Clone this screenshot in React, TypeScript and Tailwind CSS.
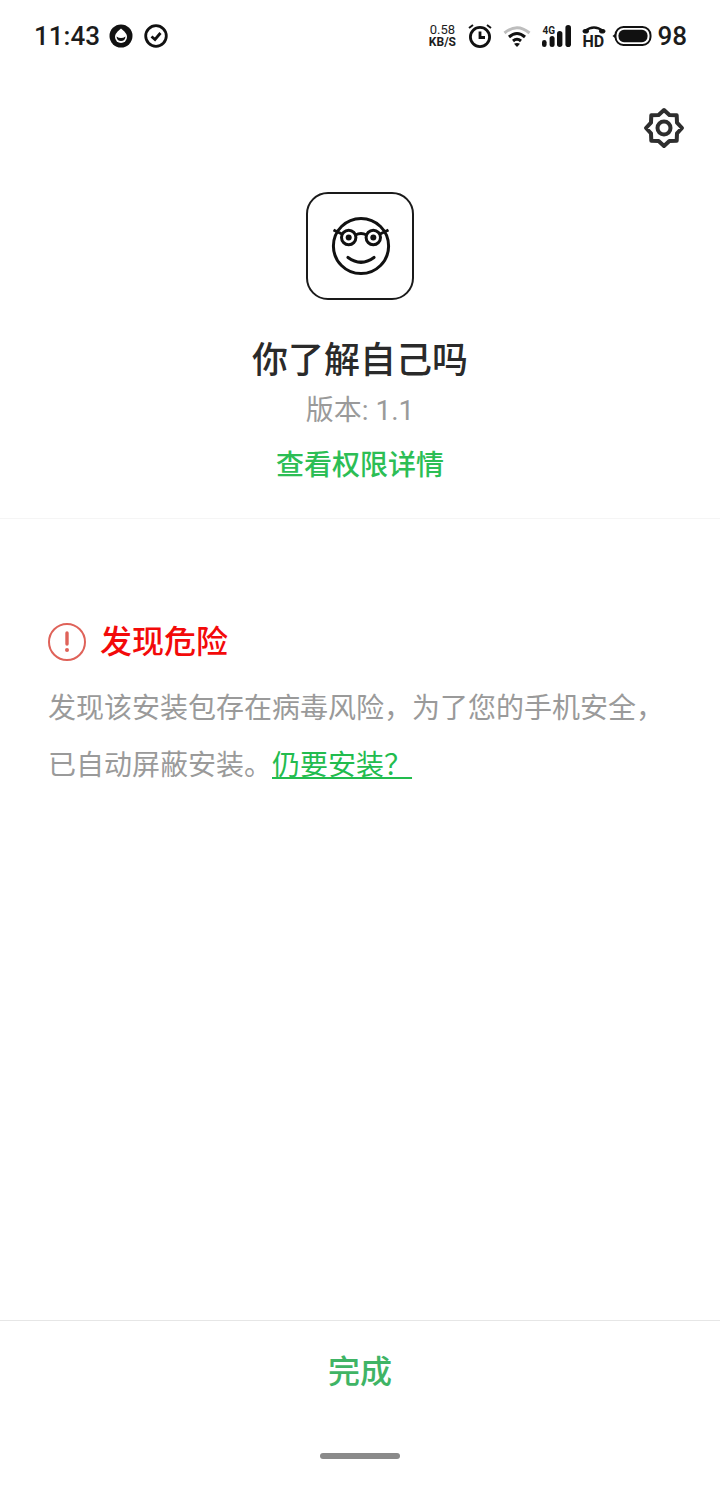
import React from "react";

const font = { fontFamily: '"Roboto", "Noto Sans CJK SC", sans-serif' };

const StatusBar = () => (
  <div className="h-[72px] flex items-center justify-between pl-[34px] pr-[33px] text-[#1c1c1c]">
    <div className="flex items-center">
      <span className="text-[26px] leading-none font-medium w-[66px]">11:43</span>
      <svg className="ml-[9px]" width="24" height="24" viewBox="0 0 24 24">
        <circle cx="12" cy="12" r="11.5" fill="#111" />
        <path d="M12 4.5 C15 7 18 9.5 18 13 A6 6 0 0 1 6 13 C6 9.5 9 7 12 4.5Z" fill="#fff" />
        <path d="M7.5 12.5 Q12 15.5 16.5 12.5 Q16 17 12 17 Q8 17 7.5 12.5Z" fill="#111" />
      </svg>
      <svg className="ml-[11px]" width="24" height="24" viewBox="0 0 24 24" fill="none" stroke="#111">
        <circle cx="12" cy="12" r="10.3" strokeWidth="2.8" />
        <path d="M7.5 12.5 L11 15.5 L16.5 9" strokeWidth="2.8" />
      </svg>
    </div>
    <div className="flex items-center">
      <div className="flex flex-col items-center leading-[12px] w-[28px]">
        <span className="text-[13px]">0.58</span>
        <span className="text-[12px] font-bold">KB/S</span>
      </div>
      <svg className="ml-[11px]" width="26" height="26" viewBox="0 0 26 26" fill="none" stroke="#111">
        <circle cx="13" cy="14" r="9.6" strokeWidth="2.8" />
        <path d="M13 8.5 V14.5 H18" strokeWidth="2.8" />
        <path d="M2 5 L6 2 M24 5 L20 2" strokeWidth="2" />
      </svg>
      <svg className="ml-[10px]" width="28" height="24" viewBox="0 0 28 24" fill="none">
        <path d="M1.5 9 Q14 -1.5 26.5 9" stroke="#bdbdbd" strokeWidth="3" />
        <path d="M6 13 Q14 6 22 13" stroke="#111" strokeWidth="3" />
        <path d="M10 17 Q14 13.5 18 17" stroke="#111" strokeWidth="3" />
        <path d="M14 23 L11 19.8 Q14 18 17 19.8Z" fill="#111" />
      </svg>
      <div className="ml-[11px] relative w-[30px] h-[22px]">
        <span className="absolute left-0 top-[0px] text-[10px] leading-[11px] font-bold">4G</span>
        <svg className="absolute inset-0" width="30" height="22" viewBox="0 0 30 22" fill="#111">
          <rect x="0" y="15" width="4.6" height="7" rx="2.3" />
          <rect x="7.6" y="11" width="5" height="11" rx="2.5" />
          <rect x="15" y="6" width="5.4" height="16" rx="2.7" />
          <rect x="23.4" y="0" width="5.6" height="22" rx="2.8" />
        </svg>
      </div>
      <div className="ml-[10px] relative w-[24px] h-[22px]">
        <svg className="absolute inset-0" width="24" height="22" viewBox="0 0 24 22" fill="none" stroke="#111">
          <path d="M3 6 Q12 -1 21 6" strokeWidth="2.6" />
          <rect x="1" y="4.5" width="5.5" height="3.5" rx="1.7" fill="#111" />
          <rect x="17.5" y="4.5" width="5.5" height="3.5" rx="1.7" fill="#111" />
        </svg>
        <span className="absolute left-0 top-[10px] text-[16px] leading-[14px] font-bold">HD</span>
      </div>
      <svg className="ml-[6px]" width="40" height="20" viewBox="0 0 40 20">
        <path d="M0.5 10 L3 8 V12Z" fill="#111" />
        <rect x="3.5" y="1" width="35" height="18" rx="8" fill="none" stroke="#111" strokeWidth="2" />
        <rect x="6.5" y="3.8" width="29" height="12.4" rx="5.5" fill="#111" />
      </svg>
      <span className="ml-[5px] text-[26px] leading-none font-medium">98</span>
    </div>
  </div>
);

const GearIcon = () => (
  <svg width="42" height="42" viewBox="0 0 42 42" fill="none" stroke="#2e2e2e" strokeWidth="4" strokeLinejoin="round">
    <path d="M21 3 L26.4 8 L33.7 8.3 L34 15.6 L39 21 L34 26.4 L33.7 33.7 L26.4 34 L21 39 L15.6 34 L8.3 33.7 L8 26.4 L3 21 L8 15.6 L8.3 8.3 L15.6 8Z" />
    <circle cx="21" cy="21" r="6.5" />
  </svg>
);

const FaceIcon = () => (
  <svg className="ml-[2px]" width="60" height="60" viewBox="0 0 60 60" fill="none" stroke="#111">
    <circle cx="30" cy="30" r="27.6" strokeWidth="3" />
    <circle cx="17.7" cy="21.5" r="7.2" strokeWidth="3" />
    <circle cx="42.3" cy="21.5" r="7.2" strokeWidth="3" />
    <circle cx="17.7" cy="21.5" r="3" fill="#111" stroke="none" />
    <circle cx="42.3" cy="21.5" r="3" fill="#111" stroke="none" />
    <path d="M24.5 19 Q30 16 35.5 19" strokeWidth="3" />
    <path d="M2.5 14 L11 18 M57.5 14 L49 18" strokeWidth="3" />
    <path d="M17 41.5 Q30 51 43 41.5" strokeWidth="3.2" strokeLinecap="round" />
  </svg>
);

export default function App() {
  return (
    <div className="w-[720px] h-[1488px] bg-white flex flex-col" style={font}>
      <StatusBar />
      <div className="flex justify-end pt-[35px] pr-[35px] h-[120px]">
        <GearIcon />
      </div>
      <div className="flex flex-col items-center border-b border-[#f5f5f5] h-[327px]">
        <div className="w-[108px] h-[108px] rounded-[22px] border-2 border-[#1a1a1a] flex items-center justify-center">
          <FaceIcon />
        </div>
        <h1 className="mt-[37px] text-[36px] leading-[48px] font-medium text-[#2a2a2a]">你了解自己吗</h1>
        <p className="mt-[6px] text-[28px] leading-[40px] text-[#9a9a9a]">版本: 1.1</p>
        <a className="mt-[15px] text-[28px] leading-[40px] font-medium text-[#2cbe55]">查看权限详情</a>
      </div>
      <div className="flex-1 pl-[48px] pr-[40px] pt-[103px]">
        <div className="flex items-center h-[40px]">
          <svg width="38" height="38" viewBox="0 0 38 38" fill="none">
            <circle cx="19" cy="19" r="18" stroke="#df6259" strokeWidth="2" />
            <path d="M19 10 V21" stroke="#df6259" strokeWidth="3.4" strokeLinecap="round" />
            <circle cx="19" cy="27" r="2" fill="#df6259" />
          </svg>
          <span className="ml-[14px] text-[32px] leading-[40px] font-medium text-[#f30a0a]">发现危险</span>
        </div>
        <p className="mt-[18px] text-[28px] leading-[57px] text-[#9a9a9a]">
          发现该安装包存在病毒风险，为了您的手机安全，
          <br />
          已自动屏蔽安装。
          <a className="text-[#22bc4e] underline">仍要安装？</a>
        </p>
      </div>
      <div className="h-[168px] border-t border-[#e6e6e6] flex flex-col items-center">
        <span className="mt-[31px] text-[32px] leading-[40px] font-medium text-[#3fb465]">完成</span>
        <div className="mt-[61px] w-[80px] h-[6px] rounded-full bg-[#8a8a8a]" />
      </div>
    </div>
  );
}
